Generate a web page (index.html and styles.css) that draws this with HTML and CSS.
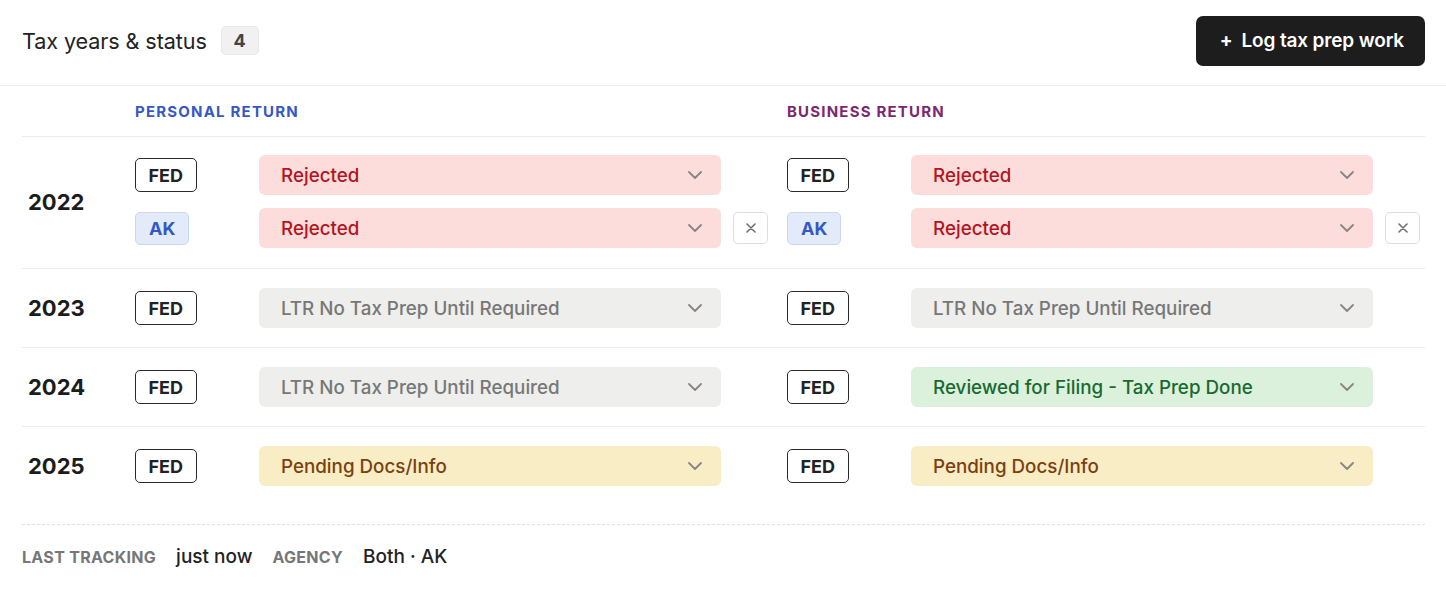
FILE: index.html
```html
<!DOCTYPE html>
<html lang="en">
<head>
<meta charset="utf-8">
<title>Tax years &amp; status</title>
<link rel="stylesheet" href="styles.css">
</head>
<body>
<header class="topbar">
  <div class="title-wrap">
    <h1 class="title">Tax years &amp; status</h1>
    <span class="count">4</span>
  </div>
  <button class="primary-btn"><span class="plus">+</span>Log tax prep work</button>
</header>

<main class="content">
  <div class="table">
    <div class="row head-row">
      <div class="year-cell"></div>
      <div class="section personal"><div class="sec-label personal-label">PERSONAL RETURN</div></div>
      <div class="section business"><div class="sec-label business-label">BUSINESS RETURN</div></div>
    </div>

    <div class="row first">
      <div class="year-cell">2022</div>
      <div class="section personal">
        <div class="line">
          <span class="juris fed">FED</span>
          <div class="select rejected"><span>Rejected</span><svg class="chev" viewBox="0 0 14 8"><path d="M1 1l6 6 6-6"/></svg></div>
          <span class="spacer"></span>
        </div>
        <div class="line">
          <span class="juris state">AK</span>
          <div class="select rejected"><span>Rejected</span><svg class="chev" viewBox="0 0 14 8"><path d="M1 1l6 6 6-6"/></svg></div>
          <button class="remove"><svg viewBox="0 0 10 10"><path d="M1 1l8 8M9 1l-8 8"/></svg></button>
        </div>
      </div>
      <div class="section business">
        <div class="line">
          <span class="juris fed">FED</span>
          <div class="select rejected"><span>Rejected</span><svg class="chev" viewBox="0 0 14 8"><path d="M1 1l6 6 6-6"/></svg></div>
          <span class="spacer"></span>
        </div>
        <div class="line">
          <span class="juris state">AK</span>
          <div class="select rejected"><span>Rejected</span><svg class="chev" viewBox="0 0 14 8"><path d="M1 1l6 6 6-6"/></svg></div>
          <button class="remove"><svg viewBox="0 0 10 10"><path d="M1 1l8 8M9 1l-8 8"/></svg></button>
        </div>
      </div>
    </div>

    <div class="row">
      <div class="year-cell">2023</div>
      <div class="section personal">
        <div class="line">
          <span class="juris fed">FED</span>
          <div class="select neutral"><span>LTR No Tax Prep Until Required</span><svg class="chev" viewBox="0 0 14 8"><path d="M1 1l6 6 6-6"/></svg></div>
          <span class="spacer"></span>
        </div>
      </div>
      <div class="section business">
        <div class="line">
          <span class="juris fed">FED</span>
          <div class="select neutral"><span>LTR No Tax Prep Until Required</span><svg class="chev" viewBox="0 0 14 8"><path d="M1 1l6 6 6-6"/></svg></div>
          <span class="spacer"></span>
        </div>
      </div>
    </div>

    <div class="row">
      <div class="year-cell">2024</div>
      <div class="section personal">
        <div class="line">
          <span class="juris fed">FED</span>
          <div class="select neutral"><span>LTR No Tax Prep Until Required</span><svg class="chev" viewBox="0 0 14 8"><path d="M1 1l6 6 6-6"/></svg></div>
          <span class="spacer"></span>
        </div>
      </div>
      <div class="section business">
        <div class="line">
          <span class="juris fed">FED</span>
          <div class="select done"><span>Reviewed for Filing - Tax Prep Done</span><svg class="chev" viewBox="0 0 14 8"><path d="M1 1l6 6 6-6"/></svg></div>
          <span class="spacer"></span>
        </div>
      </div>
    </div>

    <div class="row">
      <div class="year-cell">2025</div>
      <div class="section personal">
        <div class="line">
          <span class="juris fed">FED</span>
          <div class="select pending"><span>Pending Docs/Info</span><svg class="chev" viewBox="0 0 14 8"><path d="M1 1l6 6 6-6"/></svg></div>
          <span class="spacer"></span>
        </div>
      </div>
      <div class="section business">
        <div class="line">
          <span class="juris fed">FED</span>
          <div class="select pending"><span>Pending Docs/Info</span><svg class="chev" viewBox="0 0 14 8"><path d="M1 1l6 6 6-6"/></svg></div>
          <span class="spacer"></span>
        </div>
      </div>
    </div>
  </div>

  <footer class="meta">
    <span class="meta-label">LAST TRACKING</span>
    <span class="meta-value">just now</span>
    <span class="meta-label">AGENCY</span>
    <span class="meta-value">Both · AK</span>
  </footer>
</main>
</body>
</html>
```

FILE: styles.css
```css
* { box-sizing: border-box; }

body {
  margin: 0;
  background: #ffffff;
  font-family: Inter, "Noto Sans", "Liberation Sans", sans-serif;
  color: #1f1f1f;
}

.topbar {
  height: 86px;
  display: flex;
  align-items: center;
  justify-content: space-between;
  padding: 0 21px 4px 22px;
  border-bottom: 1px solid #ececec;
}

.title-wrap {
  display: flex;
  align-items: center;
  gap: 14px;
}

.title {
  margin: 0;
  font-size: 21.6px;
  font-weight: 400;
  color: #232323;
  letter-spacing: -0.1px;
}

.count {
  display: inline-flex;
  align-items: center;
  justify-content: center;
  width: 38px;
  height: 29px;
  background: #f1f1f1;
  border: 1px solid #e8e8e8;
  border-radius: 5px;
  font-size: 18px;
  font-weight: 700;
  color: #444;
}

.primary-btn {
  height: 50px;
  padding: 0 21px 0 24px;
  background: #1d1d1d;
  color: #fff;
  border: none;
  border-radius: 7px;
  font-family: inherit;
  font-size: 19px;
  font-weight: 600;
  display: inline-flex;
  align-items: center;
  letter-spacing: -0.15px;
}

.plus {
  font-size: 19px;
  font-weight: 700;
  margin-right: 9px;
}

.content {
  padding: 0 21px 0 22px;
}

.row {
  display: flex;
  border-bottom: 1px solid #ececec;
  padding: 19px 0 19px;
}

.row.first {
  padding: 18px 0 20px;
}

.row:last-child {
  border-bottom: none;
}

.head-row {
  padding: 0;
  height: 51px;
  align-items: center;
}

.year-cell {
  width: 113px;
  padding-left: 6px;
  display: flex;
  align-items: center;
  font-size: 22px;
  font-weight: 700;
  color: #1c1c1c;
}

.section {
  display: flex;
  flex-direction: column;
  gap: 13px;
}

.section.personal {
  width: 652px;
}

.section.business {
  width: 638px;
}

.sec-label {
  font-size: 15px;
  font-weight: 700;
  letter-spacing: 1.2px;
}

.personal-label { color: #3558c6; }
.business-label { color: #7b2870; }

.line {
  display: grid;
  grid-template-columns: 112px 462px 35px;
  column-gap: 12px;
  align-items: center;
  height: 40px;
}

.juris {
  justify-self: start;
  height: 34px;
  padding: 0 12px;
  display: inline-flex;
  align-items: center;
  border-radius: 5px;
  font-size: 18px;
  font-weight: 700;
}

.juris.fed {
  border: 1px solid #2a2a2a;
  color: #222;
  background: #fff;
  padding: 0 12.5px;
}

.juris.state {
  height: 33px;
  padding: 0 13px;
  border: 1px solid #c9d7f1;
  background: #e3ebfa;
  color: #3558c6;
}

.select {
  height: 40px;
  border-radius: 6px;
  display: flex;
  align-items: center;
  justify-content: space-between;
  padding: 0 19px 0 22px;
  font-size: 18.8px;
  font-weight: 500;
}

.chev {
  width: 14px;
  height: 8px;
  fill: none;
  stroke: #8a8585;
  stroke-width: 1.8;
  stroke-linecap: round;
  stroke-linejoin: round;
}

.rejected { background: #fddcdc; color: #b4141c; }
.neutral { background: #eeeeed; color: #777; }
.done { background: #dcf1db; color: #196a31; }
.pending { background: #f8edc4; color: #7b3f10; }

.remove {
  width: 35px;
  height: 32px;
  border: 1px solid #dedede;
  border-radius: 5px;
  background: #fff;
  display: inline-flex;
  align-items: center;
  justify-content: center;
  padding: 0;
}

.remove svg {
  width: 10px;
  height: 10px;
  stroke: #6f6f6f;
  stroke-width: 1.6;
  stroke-linecap: round;
}

.meta {
  margin-top: 19px;
  border-top: 1px dashed #e2e2e2;
  display: flex;
  align-items: center;
  gap: 20px;
  height: 64px;
}

.meta-label {
  font-size: 16px;
  font-weight: 700;
  color: #777;
  letter-spacing: 0.3px;
}

.meta-value {
  font-size: 19px;
  font-weight: 500;
  color: #222;
}
```
